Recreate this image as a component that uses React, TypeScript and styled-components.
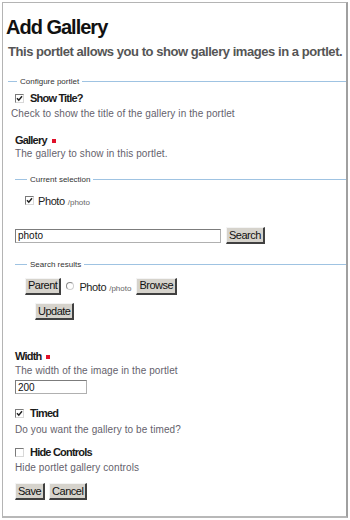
import * as React from 'react';
import styled, { createGlobalStyle } from 'styled-components';

const GlobalStyle = createGlobalStyle`
  html, body {
    margin: 0;
    padding: 0;
    background: #fff;
  }
  body {
    font-family: "Liberation Sans", Arial, sans-serif;
    color: #222;
  }
`;

const Frame = styled.div`
  box-sizing: border-box;
  margin: 2px 0 0 2px;
  width: 346px;
  height: 516px;
  border: 1px solid #b4b4b4;
  border-right: 2px solid #a0a0a0;
  border-bottom: 2px solid #b8b8b8;
  padding: 12px 0 0 3px;
  overflow: hidden;
`;

const Title = styled.h1`
  margin: 0;
  font-size: 20px;
  line-height: 24px;
  letter-spacing: -1px;
  font-weight: bold;
  color: #111;
`;

const Subtitle = styled.p`
  margin: 5px 0 0 2px;
  font-size: 13px;
  line-height: 16px;
  letter-spacing: -0.45px;
  font-weight: bold;
  color: #555;
  white-space: nowrap;
`;

const Fieldset = styled.fieldset<{ $indent: number; $top: number }>`
  margin: ${p => p.$top}px 0 0 0;
  padding: 0 0 0 ${p => p.$indent}px;
  border: none;
  border-top: 1px solid #9fc3e2;
  min-width: 0;
`;

const ConfigFieldset = styled(Fieldset)`
  margin-left: 2px;
`;

const Legend = styled.legend`
  margin-left: 2px;
  padding: 0 3px;
  font-size: 8px;
  color: #333;
`;

const Field = styled.div<{ $top?: number }>`
  margin-top: ${p => p.$top ?? 0}px;
`;

const Label = styled.div`
  display: flex;
  align-items: center;
  gap: 6px;
  font-size: 11px;
  line-height: 14px;
  font-weight: bold;
  letter-spacing: -0.8px;
  color: #1a1a1a;
`;

const Required = styled.span`
  display: inline-block;
  width: 4px;
  height: 4px;
  margin-left: -1px;
  margin-top: 2px;
  background: #e0102a;
`;

const Help = styled.div<{ $shift?: number; $top?: number }>`
  margin: ${p => p.$top ?? 2}px 0 0 ${p => -(p.$shift ?? 0)}px;
  font-size: 10px;
  line-height: 14px;
  letter-spacing: 0.1px;
  color: #655f6c;
`;

const Box = styled.span`
  box-sizing: border-box;
  display: inline-flex;
  align-items: center;
  justify-content: center;
  width: 9px;
  height: 9px;
  border: 1px solid #7a7a7a;
  border-right-color: #d8d8d8;
  border-bottom-color: #d8d8d8;
  background: #fff;
  flex: none;

  svg {
    width: 7px;
    height: 7px;
  }
`;

const Radio = styled.span`
  box-sizing: border-box;
  display: inline-block;
  width: 8px;
  height: 8px;
  border-radius: 50%;
  border: 1px solid #8a8a8a;
  border-right-color: #d0d0d0;
  border-bottom-color: #d0d0d0;
  background: #fff;
  flex: none;
`;

const Check = ({ checked }: { checked?: boolean }) => (
  <Box>
    {checked && (
      <svg viewBox="0 0 7 7">
        <path d="M1 3.2 L2.8 5.2 L6 1.3" fill="none" stroke="#222" strokeWidth="1.5" />
      </svg>
    )}
  </Box>
);

const Row = styled.div<{ $gap?: number; $top?: number; $indent?: number }>`
  display: flex;
  align-items: center;
  gap: ${p => p.$gap ?? 4}px;
  margin-top: ${p => p.$top ?? 0}px;
  padding-left: ${p => p.$indent ?? 0}px;
`;

const Item = styled.span`
  white-space: nowrap;
`;

const ItemName = styled.span`
  font-size: 11px;
  letter-spacing: -0.4px;
  color: #222;
`;

const ItemPath = styled.span`
  font-size: 8px;
  color: #666;
  margin-left: 3px;
`;

const TextInput = styled.input<{ $width: number }>`
  box-sizing: border-box;
  display: block;
  width: ${p => p.$width}px;
  height: 14px;
  padding: 0 2px;
  margin: 0;
  border: 1px solid #b0b0b0;
  border-top-color: #7c7c7c;
  border-left-color: #7c7c7c;
  font-family: "Liberation Sans", Arial, sans-serif;
  font-size: 10px;
  color: #111;
  outline: none;
`;

const Button = styled.button`
  box-sizing: border-box;
  height: 17px;
  padding: 0 2px;
  margin: 0;
  background: #d6d3cc;
  border: 1px solid #f4f4f4;
  border-right: 2px solid #404040;
  border-bottom: 2px solid #404040;
  font-family: "Liberation Sans", Arial, sans-serif;
  font-size: 11px;
  letter-spacing: -0.5px;
  line-height: 13px;
  color: #111;
`;

export default function App() {
  return (
    <>
      <GlobalStyle />
      <Frame>
        <Title>Add Gallery</Title>
        <Subtitle>This portlet allows you to show gallery images in a portlet.</Subtitle>

        <ConfigFieldset $indent={7} $top={17}>
          <Legend>Configure portlet</Legend>
          <Field $top={5}>
            <Label>
              <Check checked /> Show Title?
            </Label>
            <Help $shift={4}>Check to show the title of the gallery in the portlet</Help>
          </Field>

          <Field $top={12}>
            <Label>
              Gallery <Required />
            </Label>
            <Help $top={0}>The gallery to show in this portlet.</Help>
          </Field>

          <Fieldset $indent={10} $top={14}>
            <Legend>Current selection</Legend>
            <Row $top={7}>
              <Check checked />
              <Item>
                <ItemName>Photo</ItemName>
                <ItemPath>/photo</ItemPath>
              </Item>
            </Row>
          </Fieldset>

          <Row $gap={5} $top={18}>
            <TextInput $width={206} defaultValue="photo" />
            <Button>Search</Button>
          </Row>

          <Fieldset $indent={10} $top={16}>
            <Legend>Search results</Legend>
            <Row $gap={5} $top={8}>
              <Button>Parent</Button>
              <Radio />
              <Item>
                <ItemName>Photo</ItemName>
                <ItemPath>/photo</ItemPath>
              </Item>
              <Button>Browse</Button>
            </Row>
            <Row $top={8} $indent={10}>
              <Button>Update</Button>
            </Row>
          </Fieldset>

          <Field $top={29}>
            <Label>
              Width <Required />
            </Label>
            <Help $top={1}>The width of the image in the portlet</Help>
            <TextInput $width={72} defaultValue="200" style={{ marginTop: 2 }} />
          </Field>

          <Field $top={12}>
            <Label>
              <Check checked /> Timed
            </Label>
            <Help $top={3}>Do you want the gallery to be timed?</Help>
          </Field>

          <Field $top={8}>
            <Label>
              <Check /> Hide Controls
            </Label>
            <Help>Hide portlet gallery controls</Help>
          </Field>

          <Row $gap={4} $top={8}>
            <Button>Save</Button>
            <Button>Cancel</Button>
          </Row>
        </ConfigFieldset>
      </Frame>
    </>
  );
}
